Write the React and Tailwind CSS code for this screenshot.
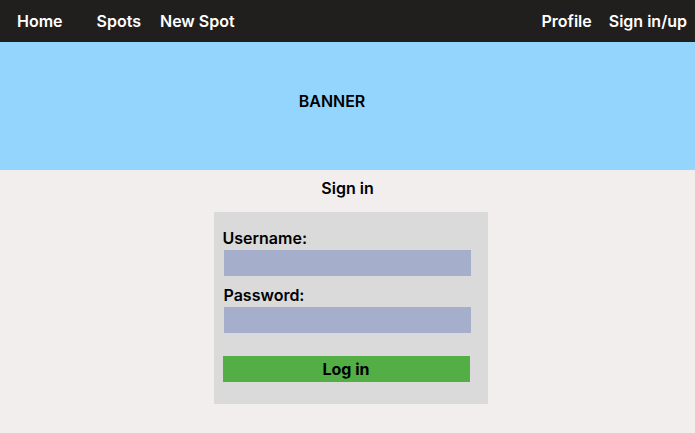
import React from 'react';

const font = { fontFamily: 'Inter, "Noto Sans", sans-serif' };

const NavBar = () => (
    <nav className="flex items-center h-[42px] bg-[#201f1e] text-white text-[16px] font-semibold">
        <a className="ml-[17px]">Home</a>
        <a className="ml-[34px]">Spots</a>
        <a className="ml-[19px]">New Spot</a>
        <div className="ml-auto flex items-center gap-[17px] pr-[8px]">
            <a>Profile</a>
            <a>Sign in/up</a>
        </div>
    </nav>
);

const SignInForm = () => (
    <div className="flex flex-col items-center">
        <h2 className="mt-[8px] h-[20px] leading-[20px] text-[16px] font-semibold text-black">Sign in</h2>
        <form className="mt-[14px] ml-[6px] w-[274px] bg-[#dadada] pt-[16px] pb-[22px] flex flex-col">
            <label className="ml-[9px] h-[20px] leading-[20px] text-[16px] font-semibold text-black">Username:</label>
            <input type="text" className="ml-[10px] mt-[2px] w-[247px] h-[26px] bg-[#a5afcb] outline-none" />
            <label className="ml-[10px] mt-[9px] h-[20px] leading-[20px] text-[16px] font-semibold text-black">Password:</label>
            <input type="password" className="ml-[10px] mt-[2px] w-[247px] h-[26px] bg-[#a5afcb] outline-none" />
            <button type="button" className="ml-[9px] mt-[23px] w-[247px] h-[26px] bg-[#53ae45] text-[16px] font-bold text-black">
                Log in
            </button>
        </form>
    </div>
);

export default function App() {
    return (
        <div style={font} className="w-[695px] h-[433px] bg-[#f1eeed] overflow-hidden">
            <NavBar />
            <div className="h-[128px] bg-[#93d5fc] flex items-center justify-center pr-[31px] pb-[10px]">
                <span className="text-[16px] font-semibold text-black">BANNER</span>
            </div>
            <SignInForm />
        </div>
    );
}
